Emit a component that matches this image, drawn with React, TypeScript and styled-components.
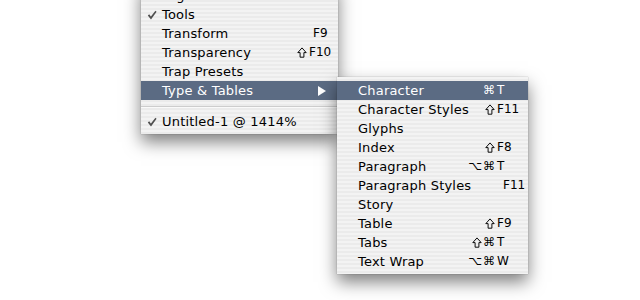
import { ReactElement } from 'react';
import styled, { createGlobalStyle } from 'styled-components';

const GlobalStyle = createGlobalStyle`
  html, body {
    margin: 0;
    padding: 0;
    background: #ffffff;
    overflow: hidden;
  }
  body {
    width: 640px;
    height: 300px;
    font-family: 'DejaVu Sans', 'Liberation Sans', sans-serif;
  }
`;

export const Styled = {
  Stage: styled.div`
    display: flex;
    align-items: flex-start;
    width: 640px;
    height: 300px;
  `,
  Menu: styled.div<{ $left: number; $top: number; $width: number; $z: number }>`
    position: relative;
    z-index: ${({ $z }) => $z};
    margin-left: ${({ $left }) => $left}px;
    margin-top: ${({ $top }) => $top}px;
    width: ${({ $width }) => $width}px;
    padding: 4px 0 3px;
    box-sizing: border-box;
    background: repeating-linear-gradient(
      180deg,
      #f3f3f3 0px,
      #f3f3f3 2px,
      #ebebeb 2px,
      #ebebeb 4px
    );
    box-shadow: 0 8px 16px rgba(0, 0, 0, 0.5), 0 0 1px rgba(0, 0, 0, 0.35);
  `,
  Row: styled.div<{ $active?: boolean; $keyWidth: number }>`
    display: grid;
    grid-template-columns: 21px 1fr auto ${({ $keyWidth }) => $keyWidth}px;
    align-items: center;
    height: 19px;
    padding-right: 4px;
    font-size: 13px;
    line-height: 19px;
    color: ${({ $active }) => ($active ? '#ffffff' : '#000000')};
    background: ${({ $active }) => ($active ? '#5b6b83' : 'transparent')};
    white-space: nowrap;
  `,
  Check: styled.span`
    display: flex;
    align-items: center;
    padding-left: 6px;
    color: #505050;
  `,
  Label: styled.span`
    letter-spacing: 0.2px;
  `,
  Mods: styled.span`
    display: flex;
    justify-content: flex-end;
    align-items: center;
    gap: 1px;
    font-size: 12px;
    padding-right: 2px;
  `,
  Key: styled.span<{ $indent?: number }>`
    font-size: 12px;
    padding-left: ${({ $indent }) => $indent ?? 0}px;
    display: flex;
    align-items: center;
  `,
  Separator: styled.div`
    height: 12px;
    display: flex;
    align-items: center;
    &::before {
      content: '';
      flex: 1;
      height: 1px;
      background: #cdcdcd;
      box-shadow: 0 1px 0 #fafafa;
    }
  `,
};

type Item = {
  label: string;
  checked?: boolean;
  mods?: string;
  key?: string;
  keyIndent?: number;
  active?: boolean;
  submenu?: boolean;
};

const windowItems: (Item | 'sep')[] = [
  { label: 'Tags' },
  { label: 'Tools', checked: true },
  { label: 'Transform', key: 'F9', keyIndent: 4 },
  { label: 'Transparency', mods: '⇧', key: 'F10' },
  { label: 'Trap Presets' },
  { label: 'Type & Tables', active: true, submenu: true },
  'sep',
  { label: 'Untitled-1 @ 1414%', checked: true },
];

const typeItems: Item[] = [
  { label: 'Character', mods: '⌘', key: 'T', active: true },
  { label: 'Character Styles', mods: '⇧', key: 'F11' },
  { label: 'Glyphs' },
  { label: 'Index', mods: '⇧', key: 'F8' },
  { label: 'Paragraph', mods: '⌥⌘', key: 'T' },
  { label: 'Paragraph Styles', key: 'F11', keyIndent: 6 },
  { label: 'Story' },
  { label: 'Table', mods: '⇧', key: 'F9' },
  { label: 'Tabs', mods: '⇧⌘', key: 'T' },
  { label: 'Text Wrap', mods: '⌥⌘', key: 'W' },
];

const SubmenuArrow = () => (
  <svg width="8" height="10" viewBox="0 0 8 10">
    <polygon points="0,0 8,5 0,10" fill="currentColor" />
  </svg>
);

const CheckMark = () => (
  <svg width="10" height="10" viewBox="0 0 10 10">
    <path
      d="M0.8 5.6 L2.2 4.3 L3.9 6.6 L8.4 0.8 L9.6 1.8 L4 9.4 Z"
      fill="currentColor"
    />
  </svg>
);

const ShiftIcon = () => (
  <svg width="10" height="11" viewBox="0 0 10 11">
    <path
      d="M5 0.9 L9.2 5.6 H6.9 V10.2 H3.1 V5.6 H0.8 Z"
      fill="none"
      stroke="currentColor"
      strokeWidth="0.95"
    />
  </svg>
);

const Modifiers = ({ mods }: { mods: string }): ReactElement => (
  <Styled.Mods>
    {[...mods].map((m, i) => (m === '⇧' ? <ShiftIcon key={i} /> : <span key={i}>{m}</span>))}
  </Styled.Mods>
);

const MenuRow = ({ item, keyWidth }: { item: Item; keyWidth: number }): ReactElement => (
  <Styled.Row $active={item.active} $keyWidth={keyWidth}>
    <Styled.Check>{item.checked ? <CheckMark /> : null}</Styled.Check>
    <Styled.Label>{item.label}</Styled.Label>
    {item.mods ? <Modifiers mods={item.mods} /> : <Styled.Mods />}
    <Styled.Key $indent={item.submenu ? 9 : item.keyIndent}>
      {item.submenu ? <SubmenuArrow /> : item.key ?? ''}
    </Styled.Key>
  </Styled.Row>
);

export default function App(): ReactElement {
  return (
    <>
      <GlobalStyle />
      <Styled.Stage>
        <Styled.Menu $left={141} $top={-18} $width={197} $z={1}>
          {windowItems.map((item, i) =>
            item === 'sep' ? (
              <Styled.Separator key={i} />
            ) : (
              <MenuRow key={item.label} item={item} keyWidth={25} />
            )
          )}
        </Styled.Menu>
        <Styled.Menu $left={-1} $top={77} $width={191} $z={2}>
          {typeItems.map((item) => (
            <MenuRow key={item.label} item={item} keyWidth={27} />
          ))}
        </Styled.Menu>
      </Styled.Stage>
    </>
  );
}
